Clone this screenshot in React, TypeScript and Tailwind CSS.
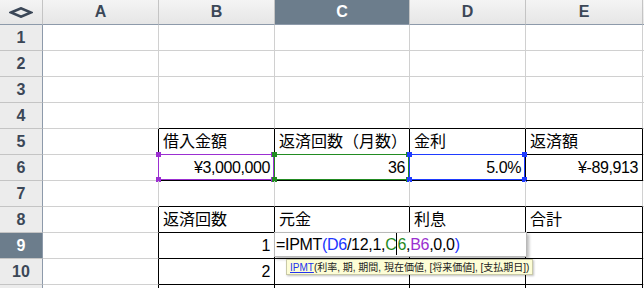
import React from "react";

const COLS = ["A", "B", "C", "D", "E"];
const ROWS = [1, 2, 3, 4, 5, 6, 7, 8, 9, 10, 11];
const TABLE_ROWS = new Set([5, 6, 8, 9, 10, 11]);

type Cell = { text: string; right?: boolean };

const data: Record<string, Cell> = {
  B5: { text: "借入金額" },
  C5: { text: "返済回数（月数）" },
  D5: { text: "金利" },
  E5: { text: "返済額" },
  B6: { text: "¥3,000,000", right: true },
  C6: { text: "36", right: true },
  D6: { text: "5.0%", right: true },
  E6: { text: "¥-89,913", right: true },
  B8: { text: "返済回数" },
  C8: { text: "元金" },
  D8: { text: "利息" },
  E8: { text: "合計" },
  B9: { text: "1", right: true },
  B10: { text: "2", right: true },
};

// colour of the range outline while editing the formula
const refs: Record<string, { box: string; dot: string }> = {
  B6: { box: "border-[#9b2fd1]", dot: "bg-[#9b2fd1]" },
  C6: { box: "border-[#228b22]", dot: "bg-[#228b22]" },
  D6: { box: "border-[#1f3cff]", dot: "bg-[#1f3cff]" },
};

function inTable(r: number, c: number) {
  return TABLE_ROWS.has(r) && c >= 1 && c <= 4;
}

function Diamond() {
  return (
    <svg width="24" height="11" viewBox="0 0 24 11" fill="none">
      <path d="M2 5.5 L12 1.3 L22 5.5 L12 9.7 Z" stroke="#3b4757" strokeWidth="2.6" strokeLinejoin="miter" />
    </svg>
  );
}

function RefBox({ id }: { id: string }) {
  const r = refs[id];
  return (
    <div className={`absolute -left-px -top-px right-0 bottom-0 border ${r.box}`}>
      <span className={`absolute -left-[3px] -top-[3px] w-[5px] h-[5px] ${r.dot}`} />
      <span className={`absolute -right-[3px] -top-[3px] w-[5px] h-[5px] ${r.dot}`} />
      <span className={`absolute -left-[3px] -bottom-[3px] w-[5px] h-[5px] ${r.dot}`} />
      <span className={`absolute -right-[3px] -bottom-[3px] w-[5px] h-[5px] ${r.dot}`} />
    </div>
  );
}

function FormulaEditor() {
  return (
    <>
      <div className="absolute -left-px -top-px z-10 w-[253px] h-[25px] bg-white border border-[#b9b9b9] shadow-[2px_2px_3px_rgba(0,0,0,0.28)] flex items-center pl-px text-[16px] tracking-[-0.3px] text-black whitespace-nowrap">
        <span>=IPMT</span>
        <span className="text-[#2034ff]">(D6</span>
        <span>/12,1,</span>
        <span className="text-[#1f8a1f]">C</span>
        <span className="w-px h-[22px] bg-black self-start" />
        <span className="text-[#1f8a1f]">6</span>
        <span>,</span>
        <span className="text-[#9b30cf]">B6</span>
        <span>,0,0</span>
        <span className="text-[#2034ff]">)</span>
      </div>
      <div className="absolute left-[11px] top-[26px] z-20 h-[16px] px-[3px] bg-[#fdfdd6] border border-[#c9c9a8] shadow-[1px_1px_2px_rgba(0,0,0,0.25)] flex items-center text-[10px] text-[#222] whitespace-nowrap">
        <span className="text-[#2233ee] underline">IPMT</span>
        <span>(利率, 期, 期間, 現在価値, [将来価値], [支払期日])</span>
      </div>
    </>
  );
}

export default function App() {
  return (
    <div className="w-[644px] h-[288px] overflow-hidden bg-white font-['Liberation_Sans','Noto_Sans_CJK_JP',sans-serif]">
      <div className="grid grid-cols-[43px_116px_116px_135px_116px_117px_1fr] grid-rows-[25px_repeat(11,26px)]">
        {/* header row */}
        <div className="flex items-center justify-center bg-gradient-to-b from-[#f4f4f4] to-[#e6e6e6] border-r border-b border-r-[#c4c4c4] border-b-[#8d9aaa]">
          <Diamond />
        </div>
        {COLS.map((c) => (
          <div
            key={c}
            className={
              c === "C"
                ? "flex items-center justify-center bg-[#6c7d8c] text-white text-[16px] font-bold border-r border-b border-r-[#c4c4c4] border-b-[#8d9aaa]"
                : "flex items-center justify-center bg-gradient-to-b from-[#f4f4f4] to-[#e6e6e6] text-[#3b4757] text-[16px] font-bold border-r border-b border-r-[#c4c4c4] border-b-[#8d9aaa]"
            }
          >
            {c}
          </div>
        ))}
        <div className="bg-gradient-to-b from-[#f4f4f4] to-[#e6e6e6] border-b border-b-[#8d9aaa]" />

        {ROWS.map((r) => (
          <React.Fragment key={r}>
            <div
              className={
                r === 9
                  ? "flex items-center justify-center bg-[#6c7d8c] text-white text-[16px] font-bold border-r border-b border-r-[#8d9aaa] border-b-[#c4c4c4]"
                  : "flex items-center justify-center bg-[#ececec] text-[#3b4757] text-[16px] font-bold border-r border-b border-r-[#8d9aaa] border-b-[#c4c4c4]"
              }
            >
              {r < 11 ? r : null}
            </div>
            {COLS.map((c, ci) => {
              const id = `${c}${r}`;
              const cell = data[id];
              const blackB = inTable(r, ci) || inTable(r + 1, ci);
              const blackR = inTable(r, ci) || inTable(r, ci + 1);
              return (
                <div
                  key={id}
                  className={[
                    "relative flex items-center px-1 text-[16px] text-black whitespace-nowrap border-r border-b",
                    blackB ? "border-b-black" : "border-b-[#d0d0d0]",
                    blackR ? "border-r-black" : "border-r-[#d0d0d0]",
                    cell?.right ? "justify-end tracking-[-0.4px]" : "justify-start",
                  ].join(" ")}
                >
                  {cell?.text}
                  {refs[id] && <RefBox id={id} />}
                  {id === "C9" && <FormulaEditor />}
                </div>
              );
            })}
            <div className="border-b border-b-[#d0d0d0]" />
          </React.Fragment>
        ))}
      </div>
    </div>
  );
}
